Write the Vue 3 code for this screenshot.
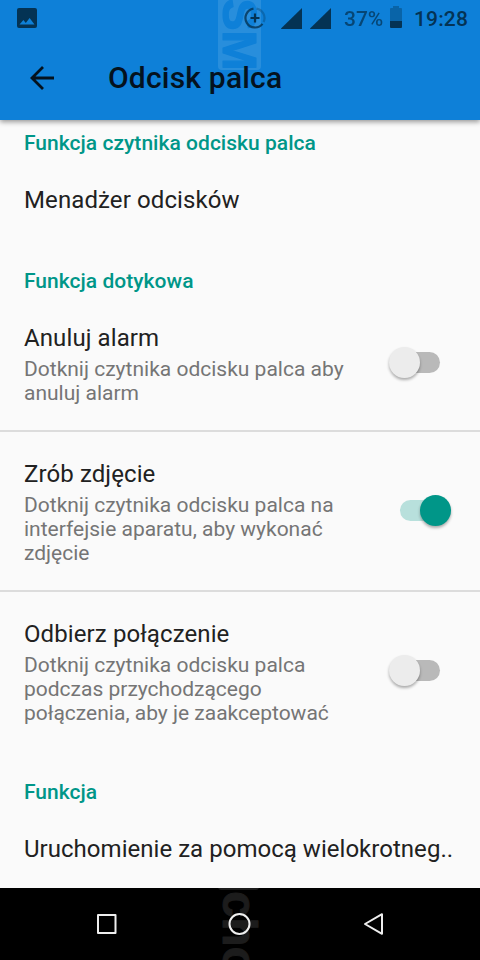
<script setup>
const groups = [
  { title: 'Funkcja czytnika odcisku palca', items: [{ title: 'Menadżer odcisków' }] },
  {
    title: 'Funkcja dotykowa',
    items: [
      { title: 'Anuluj alarm', lines: ['Dotknij czytnika odcisku palca aby', 'anuluj alarm'], on: false },
      { title: 'Zrób zdjęcie', lines: ['Dotknij czytnika odcisku palca na', 'interfejsie aparatu, aby wykonać', 'zdjęcie'], on: true },
      { title: 'Odbierz połączenie', lines: ['Dotknij czytnika odcisku palca', 'podczas przychodzącego', 'połączenia, aby je zaakceptować'], on: false },
    ],
  },
  { title: 'Funkcja', items: [{ title: 'Uruchomienie za pomocą wielokrotneg..', long: true }] },
]
</script>

<template>
  <div class="screen">
    <header class="top">
      <svg class="mark-top" width="43" height="70" viewBox="0 0 43 70">
        <defs>
          <mask id="cut">
            <path d="M0 0H43V66Q43 70 39 70H4Q0 70 0 66Z" fill="#fff" />
            <text class="cut-text" transform="translate(4.5 70.5) rotate(90)" text-anchor="end">SM</text>
          </mask>
        </defs>
        <rect width="43" height="70" fill="#fff" fill-opacity=".11" mask="url(#cut)" />
      </svg>
      <div class="status">
        <svg class="photo" width="20" height="20" viewBox="0 0 20 20">
          <path fill-rule="evenodd" d="M2 0H18Q20 0 20 2V18Q20 20 18 20H2Q0 20 0 18V2Q0 0 2 0ZM2.5 16.5H17.5L12.6 10L8.8 15L6.4 12Z" />
        </svg>
        <svg class="saver" width="22" height="22" viewBox="0 0 22 22" fill="none" stroke-width="2.2">
          <path d="M12.5 1.6A9.5 9.5 0 0 1 19.6 15" stroke="#043354" stroke-opacity=".3" />
          <path d="M9.5 1.6A9.5 9.5 0 1 0 18.5 16.8" stroke="#043354" stroke-opacity=".8" />
          <path d="M11 6.5V15.5M6.5 11H15.5" stroke="#043354" />
        </svg>
        <svg class="signal" width="21" height="21" viewBox="0 0 21 21"><path d="M21 0V21H1Q-.5 21 .5 20Z" /></svg>
        <svg class="signal second" width="21" height="21" viewBox="0 0 21 21"><path d="M21 0V21H1Q-.5 21 .5 20Z" /></svg>
        <span class="percent">37%</span>
        <svg class="battery" width="12" height="22" viewBox="0 0 12 22">
          <path d="M3 0H9V2H11Q12 2 12 3V15H0V3Q0 2 1 2H3Z" fill-opacity=".36" />
          <path d="M0 15H12V21Q12 22 11 22H1Q0 22 0 21Z" />
        </svg>
        <span class="clock">19:28</span>
      </div>
      <div class="appbar">
        <svg class="back" width="24" height="24" viewBox="0 0 24 24" fill="none" stroke="#04121e" stroke-width="2.8">
          <path d="M24 12H2M13 1L2 12L13 23" />
        </svg>
        <h1>Odcisk palca</h1>
      </div>
    </header>

    <main>
      <section v-for="group in groups" :key="group.title">
        <h2>{{ group.title }}</h2>
        <div v-for="item in group.items" :key="item.title" class="item" :class="{ detailed: item.lines, long: item.long }">
          <div class="copy">
            <h3>{{ item.title }}</h3>
            <p v-for="line in item.lines" :key="line">{{ line }}</p>
          </div>
          <div v-if="item.lines" class="switch" :class="{ on: item.on }"><i></i></div>
        </div>
      </section>
    </main>

    <nav>
      <svg class="mark-bottom" width="50" height="72" viewBox="0 0 50 72">
        <path d="M0 0H41Q40 2 38 2H3Q1 2 0 0Z" fill="#1c1c1c" />
        <text class="mark-text" transform="translate(4.5 3.2) rotate(90)">cho</text>
      </svg>
      <svg class="keys" width="480" height="72" viewBox="0 0 480 72" fill="none" stroke="#eee" stroke-width="2" stroke-linejoin="round">
        <rect x="98" y="27" width="17.5" height="18" />
        <circle cx="239.5" cy="36" r="10" />
        <path d="M382 26.2V45.8L365 36Z" />
      </svg>
    </nav>
  </div>
</template>

<style>
body { margin: 0; }
</style>

<style scoped>
.screen { width: 480px; height: 960px; display: flex; flex-direction: column; overflow: hidden; background: #fafafa; font-family: Roboto, sans-serif; }
h1, h2, h3, p { margin: 0; white-space: nowrap; }
svg { display: block; flex: none; }
.top { position: relative; z-index: 1; height: 120px; flex: none; background: #0e80d8; box-shadow: 0 2px 5px rgba(0, 0, 0, .4); }
.mark-top { position: absolute; left: 218px; top: 0; }
.cut-text { font: bold 48px "Liberation Sans", sans-serif; fill: #000; stroke: #000; stroke-width: 1.2px; stroke-linejoin: round; }
.mark-text { font: bold 47.5px "Liberation Sans", sans-serif; fill: #1c1c1c; stroke: #1c1c1c; stroke-width: 1px; stroke-linejoin: round; }
.status { position: relative; display: flex; align-items: flex-start; height: 36px; padding: 8px 12px 0 17px; box-sizing: border-box; fill: #043354; color: #043354; font-size: 21px; font-weight: 500; line-height: 22px; }
.saver { margin: -1px 0 0 207px; }
.signal { margin-left: 15px; }
.second { margin-left: 8px; }
.percent { margin-left: 13px; opacity: .75; }
.battery { margin: -2px 0 0 7px; }
.clock { margin-left: auto; letter-spacing: .15px; }
.appbar { position: relative; display: flex; align-items: center; height: 84px; padding-left: 30px; gap: 54px; }
h1 { color: #04121e; font-size: 30px; font-weight: 500; line-height: 36px; letter-spacing: .2px; }
main { flex: 1; min-height: 0; padding: 0 24px; overflow: hidden; }
section { padding-top: 11px; height: 127px; }
section:nth-child(2) { height: 500px; }
h2 { color: #009688; font-size: 21px; font-weight: 500; line-height: 24px; height: 24px; letter-spacing: .03px; }
.item { display: flex; justify-content: space-between; padding: 31px 0 0; color: #212121; }
h3 { font-size: 24px; font-weight: 400; line-height: 28px; letter-spacing: .1px; }
.long h3 { letter-spacing: .03px; }
.detailed { margin: 0 -24px; padding: 31px 28px 25px 24px; border-bottom: 2px solid #dcdcdc; align-items: center; }
.detailed + .detailed { padding-top: 28px; }
.detailed:last-child { border: 0; }
.detailed h3 { margin-bottom: 5px; }
p { color: #757575; font-size: 21px; line-height: 24px; }
.switch { position: relative; width: 40px; height: 21px; margin: 0 12px 4px 0; border-radius: 11px; background: #b9b9b9; }
.switch i { position: absolute; left: -11px; top: -5px; width: 31px; height: 31px; border-radius: 50%; background: #ececec; box-shadow: 0 2px 3px rgba(0, 0, 0, .32); }
.switch.on { background: #b8e0dc; }
.switch.on i { left: 20px; background: #009688; }
nav { position: relative; height: 72px; flex: none; overflow: hidden; background: #000; }
.mark-bottom { position: absolute; left: 218px; top: 0; }
.keys { position: relative; }
</style>
